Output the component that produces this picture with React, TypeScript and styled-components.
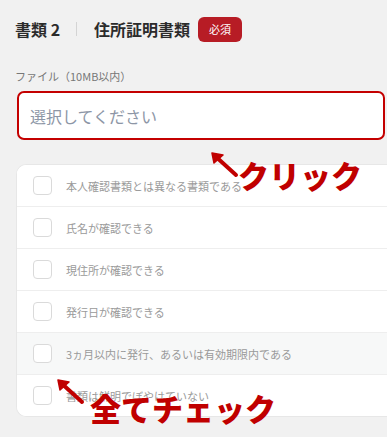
import React from "react";
import styled, { createGlobalStyle } from "styled-components";

const Global = createGlobalStyle`
  html, body { margin: 0; padding: 0; background: #f1f1f1; }
  body { font-family: "Noto Sans CJK JP", "Noto Sans", sans-serif; }
`;

const Page = styled.div`
  position: relative;
  width: 387px;
  height: 437px;
  overflow: hidden;
  background: #f1f1f1;
  padding: 15px 0 0 15px;
  box-sizing: border-box;
`;

const TitleRow = styled.div`
  display: flex;
  align-items: center;
  height: 28px;
`;

const Title = styled.span`
  font-size: 16px;
  font-weight: 700;
  color: #2b2b2b;
`;

const Divider = styled.span`
  width: 1px;
  height: 14px;
  background: #d4d4d4;
  margin: 0 17px 0 16px;
`;

const Badge = styled.span`
  margin-left: 8px;
  background: #b71c25;
  color: #fff;
  font-size: 11px;
  line-height: 25px;
  height: 25px;
  padding: 0 11px;
  border-radius: 6px;
`;

const Label = styled.div`
  margin-top: 25px;
  font-size: 11px;
  color: #777;
  line-height: 16px;
`;

const Input = styled.div`
  margin: 7px 2px 0 2px;
  height: 49px;
  border: 2px solid #c40000;
  border-radius: 7px;
  background: #fff;
  box-sizing: border-box;
  display: flex;
  align-items: center;
  padding-left: 11px;
  font-size: 16px;
  color: #8d96a6;
`;

const Card = styled.div`
  margin: 24px 0 0 1px;
  background: #fff;
  border: 1px solid #e7e7e7;
  border-right: none;
  border-radius: 10px 0 0 10px;
  overflow: hidden;
`;

const Row = styled.div<{ $shaded?: boolean }>`
  display: flex;
  align-items: center;
  height: 41px;
  padding-left: 16px;
  background: ${(p) => (p.$shaded ? "#f7f8f8" : "#fff")};
  & + & { border-top: 1px solid #eeeeee; }
`;

const Box = styled.span`
  width: 19px;
  height: 19px;
  border: 1px solid #dadada;
  border-radius: 4px;
  box-sizing: border-box;
  background: #fff;
  margin-right: 14px;
  flex-shrink: 0;
`;

const RowText = styled.span`
  font-size: 11px;
  color: #9a9a9a;
`;

const Note = styled.div<{ $x: number; $y: number }>`
  position: absolute;
  left: ${(p) => p.$x}px;
  top: ${(p) => p.$y}px;
  font-size: 31px;
  font-weight: 900;
  color: #c00000;
  line-height: 1;
  white-space: nowrap;
  text-shadow: 0 0 1px #fff;
`;

const Arrow = styled.svg<{ $x: number; $y: number }>`
  position: absolute;
  left: ${(p) => p.$x}px;
  top: ${(p) => p.$y}px;
  overflow: visible;
`;

const ArrowIcon = ({ x, y }: { x: number; y: number }) => (
  <Arrow $x={x} $y={y} width="30" height="28" viewBox="0 0 30 28">
    <path d="M27 25 L5 5" stroke="#c00000" strokeWidth="4" strokeLinecap="round" fill="none" />
    <path d="M3 3 L14 5 L5 13 Z" fill="#c00000" stroke="#c00000" strokeWidth="1.5" strokeLinejoin="round" />
  </Arrow>
);

const items = [
  "本人確認書類とは異なる書類である",
  "氏名が確認できる",
  "現住所が確認できる",
  "発行日が確認できる",
  "3ヵ月以内に発行、あるいは有効期限内である",
  "書類は鮮明でぼやけていない",
];

export default function App() {
  return (
    <>
      <Global />
      <Page>
        <TitleRow>
          <Title>書類 2</Title>
          <Divider />
          <Title>住所証明書類</Title>
          <Badge>必須</Badge>
        </TitleRow>
        <Label>ファイル（10MB以内）</Label>
        <Input>選択してください</Input>
        <Card>
          {items.map((t, i) => (
            <Row key={t} $shaded={i === 4}>
              <Box />
              <RowText>{t}</RowText>
            </Row>
          ))}
        </Card>
        <ArrowIcon x={209} y={150} />
        <Note $x={238} $y={159}>クリック</Note>
        <ArrowIcon x={55} y={377} />
        <Note $x={90} $y={392}>全てチェック</Note>
      </Page>
    </>
  );
}
